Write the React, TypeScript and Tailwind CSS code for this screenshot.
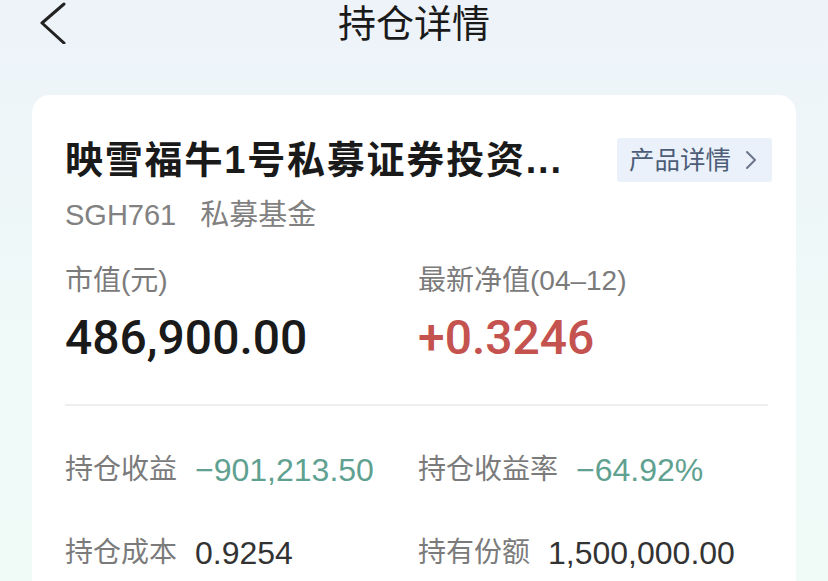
import React from 'react';

const font = { fontFamily: '"Liberation Sans", "Noto Sans CJK SC", sans-serif' };
const numFont = { fontFamily: 'Roboto, "Liberation Sans", sans-serif' };

interface Stat {
  label: string;
  value: string;
  tone: 'green' | 'dark';
}

const rows: Stat[][] = [
  [
    { label: '持仓收益', value: '−901,213.50', tone: 'green' },
    { label: '持仓收益率', value: '−64.92%', tone: 'green' },
  ],
  [
    { label: '持仓成本', value: '0.9254', tone: 'dark' },
    { label: '持有份额', value: '1,500,000.00', tone: 'dark' },
  ],
];

const StatCell: React.FC<{ stat: Stat; wide?: boolean }> = ({ stat, wide }) => (
  <div className={`flex items-center ${wide ? 'w-[353px]' : 'flex-1'}`}>
    <span className="text-[28px] leading-[34px] text-[#7b7b7b]">{stat.label}</span>
    <span
      className={`ml-[18px] text-[32px] leading-[34px] ${
        stat.tone === 'green' ? 'text-[#5fa190]' : 'text-[#333333]'
      }`}
    >
      {stat.value}
    </span>
  </div>
);

export default function App() {
  return (
    <div
      className="h-[581px] w-[828px] overflow-hidden bg-gradient-to-b from-[#edf3f9] via-[#eff9f8] to-[#f0fbf8]"
      style={font}
    >
      {/* Header */}
      <div className="relative flex h-[48px] items-center justify-center">
        <svg
          className="absolute left-[38px] top-[2px]"
          width="30"
          height="42"
          viewBox="0 0 30 42"
          fill="none"
        >
          <path d="M26 2 L4 21 L26 41" stroke="#222" strokeWidth="3" strokeLinecap="round" strokeLinejoin="round" />
        </svg>
        <h1 className="text-[38px] font-normal leading-[46px] text-[#1a1a1a]">持仓详情</h1>
      </div>

      {/* Card */}
      <div className="mx-[32px] mt-[47px] h-[600px] rounded-[18px] bg-white px-[33px] pt-[43px]">
        <div className="flex h-[44px] items-center justify-between">
          <div className="text-[38px] font-bold leading-[44px] tracking-[1.8px] text-[#1a1a1a]">
            映雪福牛1号私募证券投资...
          </div>
          <div className="mr-[-9px] flex h-[44px] w-[155px] items-center rounded-[3px] bg-[#ebf1fa] pl-[12px]">
            <span className="text-[25.5px] leading-[30px] text-[#4d5d78]">产品详情</span>
            <svg className="ml-[14px]" width="12" height="20" viewBox="0 0 12 20" fill="none">
              <path d="M2 2 L10 10 L2 18" stroke="#6b768a" strokeWidth="2" strokeLinecap="round" strokeLinejoin="round" />
            </svg>
          </div>
        </div>

        <div className="mt-[16px] flex items-center text-[29px] leading-[34px] text-[#818181]">
          <span>SGH761</span>
          <span className="ml-[24px]">私募基金</span>
        </div>

        <div className="mt-[32px] flex">
          <div className="w-[353px]">
            <div className="text-[28px] leading-[34px] text-[#7b7b7b]">市值(元)</div>
            <div className="mt-[12px] text-[48px] font-medium leading-[56px] text-[#1a1a1a]" style={numFont}>
              486,900.00
            </div>
          </div>
          <div className="flex-1">
            <div className="text-[28px] leading-[34px] text-[#7b7b7b]">最新净值(04–12)</div>
            <div className="mt-[12px] text-[48px] font-medium leading-[56px] text-[#c4524e]" style={numFont}>
              +0.3246
            </div>
          </div>
        </div>

        <div className="mt-[38px] h-[2px] w-[703px] bg-[#eeeeee]" />

        <div className="mt-[47px] flex flex-col gap-[49px]">
          {rows.map((row, i) => (
            <div key={i} className="flex">
              <StatCell stat={row[0]} wide />
              <StatCell stat={row[1]} />
            </div>
          ))}
        </div>
      </div>
    </div>
  );
}
